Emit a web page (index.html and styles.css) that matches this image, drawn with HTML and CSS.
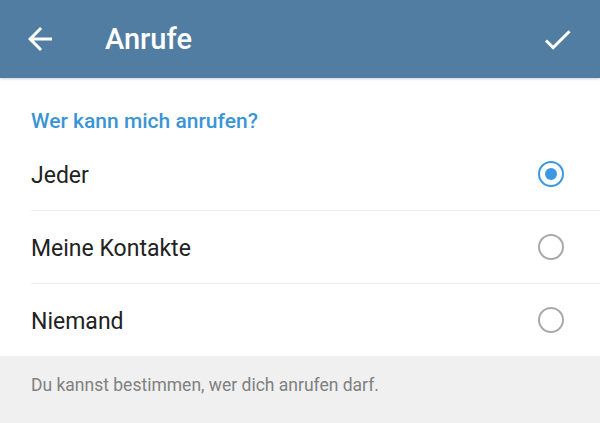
FILE: index.html
```html
<!DOCTYPE html>
<html lang="de">
<head>
    <meta charset="UTF-8">
    <meta name="viewport" content="width=device-width, initial-scale=1.0">
    <title>Anrufe</title>
    <link rel="stylesheet" href="styles.css">
</head>
<body>
    <div class="header">
        <button class="icon-btn">
            <svg width="36" height="36" viewBox="0 0 24 24">
                <path d="M20 11H7.83l5.59-5.59L12 4l-8 8 8 8 1.41-1.41L7.83 13H20v-2z" fill="#fff"/>
            </svg>
        </button>
        <div class="title">Anrufe</div>
        <button class="icon-btn">
            <svg width="35" height="35" viewBox="0 0 24 24">
                <path d="M9 16.17L4.83 12l-1.42 1.41L9 19 21 7l-1.41-1.41z" fill="#fff"/>
            </svg>
        </button>
    </div>

    <div class="section">
        <div class="section-title">Wer kann mich anrufen?</div>
        <div class="option">
            <span class="label">Jeder</span>
            <span class="radio checked"></span>
        </div>
        <div class="option">
            <span class="label">Meine Kontakte</span>
            <span class="radio"></span>
        </div>
        <div class="option last">
            <span class="label">Niemand</span>
            <span class="radio"></span>
        </div>
    </div>

    <div class="info">Du kannst bestimmen, wer dich anrufen darf.</div>
</body>
</html>
```

FILE: styles.css
```css
body {
    font-family: Roboto, "Noto Sans", sans-serif;
    margin: 0;
    background-color: #f0f0f0;
}

.header {
    height: 78px;
    background-color: #517da2;
    display: flex;
    align-items: center;
    padding: 0 25px 0 22px;
    position: relative;
    box-shadow: 0 1px 3px rgba(40, 80, 130, 0.25);
}

.icon-btn {
    background: none;
    border: none;
    padding: 0;
    display: flex;
    align-items: center;
    justify-content: center;
    cursor: pointer;
}

.title {
    color: #fff;
    font-size: 29px;
    font-weight: 500;
    margin-left: 47px;
    flex: 1;
}

.section {
    background-color: #fff;
}

.section-title {
    color: #3a95d5;
    font-size: 21px;
    font-weight: 500;
    line-height: 24px;
    padding: 31px 31px 5px;
}

.option {
    height: 72px;
    margin-left: 31px;
    padding-right: 36px;
    border-bottom: 1px solid #ececec;
    display: flex;
    align-items: center;
    justify-content: space-between;
    font-size: 23px;
    color: #222;
}

.option .label {
    padding-top: 3px;
}

.option.last {
    border-bottom: none;
}

.radio {
    width: 22px;
    height: 22px;
    border: 2.5px solid #a9a9a9;
    border-radius: 50%;
    box-sizing: content-box;
    position: relative;
}

.radio.checked {
    border-color: #3a98e4;
}

.radio.checked::after {
    content: "";
    position: absolute;
    left: 5px;
    top: 5px;
    width: 12px;
    height: 12px;
    border-radius: 50%;
    background-color: #3a98e4;
}

.info {
    padding: 18px 31px;
    font-size: 17.5px;
    line-height: 22px;
    color: #808080;
}
```
